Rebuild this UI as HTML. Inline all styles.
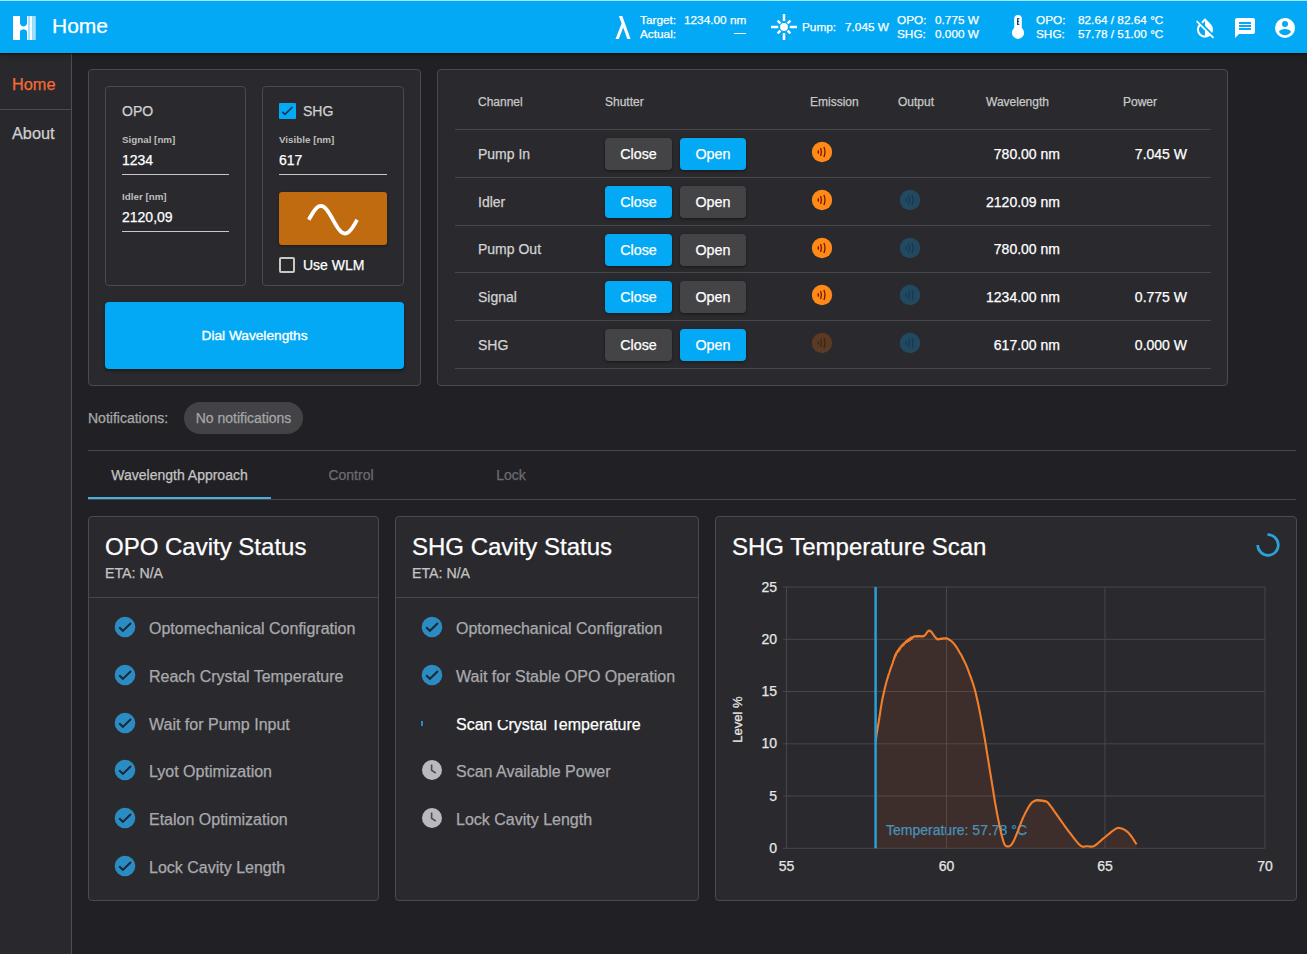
<!DOCTYPE html>
<html><head><meta charset="utf-8">
<style>
*{box-sizing:border-box;margin:0;padding:0}
html,body{width:1307px;height:954px;overflow:hidden;background:#212125;font-family:"Liberation Sans",sans-serif;color:#fff}
.a{position:absolute}
.t{position:absolute;white-space:nowrap;line-height:1;-webkit-text-stroke-width:0.25px}
#hdr{left:0;top:0;width:1307px;height:53px;background:#03a9f4;box-shadow:inset 0 1px 0 #9eeaff,0 1px 1px rgba(0,0,0,.5),0 2px 6px rgba(0,0,0,.25);z-index:5}
#side{left:0;top:53px;width:72px;height:901px;background:#29292d;border-right:1px solid #4d4d52}
.box{position:absolute;background:#2a2a2e;border:1px solid #4a4a4f;border-radius:4px}
.btn{position:absolute;height:32px;border-radius:4px;font-size:14.3px;text-align:center;line-height:33px;-webkit-text-stroke-width:0.25px;color:#fff;box-shadow:0 1px 3px rgba(0,0,0,.45)}
.g{background:#444447}
.b{background:#03a9f4}
.hl{position:absolute;height:1px;background:#46464b}
</style></head><body>
<div id="hdr" class="a">
<svg class="a" style="left:13px;top:16px" width="23" height="24" viewBox="0 0 23 24">
<path fill="#fff" d="M0 0H7V7.5C8 11.4 13 11.4 14 7.5V15.4C13 12.6 8 12.6 7 15.4V24H0Z"/>
<rect x="14" y="0" width="1" height="24" fill="#fff"/>
<rect x="15" y="0" width="2" height="24" fill="#a8e2ff"/>
<rect x="17" y="0" width="2.2" height="24" fill="#f4fcff"/>
<rect x="19.2" y="0" width="2.5" height="24" fill="#a8e2ff"/>
<rect x="21.7" y="0" width="0.8" height="24" fill="#fff"/>
</svg>
<div class="t" style="left:52px;top:14.6px;font-size:21px">Home</div>
<svg class="a" style="left:615px;top:16px" width="16" height="23" viewBox="0 0 16 23"><path fill="#fff" d="M3.9 0H7.3L15.6 23H12.3L8.2 11.6L3.8 23H0.5L6.6 7.4Z"/></svg>
<div class="t" style="left:640px;top:14.6px;font-size:11.8px">Target:</div>
<div class="t" style="left:640px;top:29px;font-size:11.8px">Actual:</div>
<div class="t" style="left:684px;top:14.6px;font-size:11.8px">1234.00 nm</div>
<div class="a" style="left:734px;top:33px;width:12px;height:1px;background:#fff"></div>
<svg class="a" style="left:771px;top:14px" width="26" height="26" viewBox="0 0 26 26"><circle cx="13" cy="13" r="3.9" fill="#fff"/><g stroke="#fff" stroke-width="2.5" stroke-linecap="butt"><path d="M13 0V7M13 19V26M0 13H7.3M18.7 13H26"/><path d="M9.4 9.4L6.6 6.6M16.6 16.6L19.4 19.4M16.6 9.4L19.4 6.6M9.4 16.6L6.6 19.4"/></g></svg>
<div class="t" style="left:802px;top:22px;font-size:11.8px">Pump:</div>
<div class="t" style="left:845px;top:22px;font-size:11.8px">7.045 W</div>
<div class="t" style="left:897px;top:14.6px;font-size:11.8px">OPO:</div>
<div class="t" style="left:897px;top:29px;font-size:11.8px">SHG:</div>
<div class="t" style="left:935px;top:14.6px;font-size:11.8px">0.775 W</div>
<div class="t" style="left:935px;top:29px;font-size:11.8px">0.000 W</div>
<svg class="a" style="left:1011px;top:14px" width="14" height="26" viewBox="0 0 14 26"><rect x="3.2" y="1" width="7.6" height="18" rx="3.8" fill="#fff"/><circle cx="7" cy="18.8" r="6.1" fill="#fff"/><path d="M6.7 4.2V11" stroke="#123a5c" stroke-width="1.3"/><path d="M6.7 4.5H8.4M6.7 7.3H8.2M6.7 10.4H8.4" stroke="#123a5c" stroke-width="0.9"/></svg>
<div class="t" style="left:1036px;top:14.6px;font-size:11.8px">OPO:</div>
<div class="t" style="left:1036px;top:29px;font-size:11.8px">SHG:</div>
<div class="t" style="left:1078px;top:14.6px;font-size:11.8px">82.64 / 82.64 &#176;C</div>
<div class="t" style="left:1078px;top:29px;font-size:11.8px">57.78 / 51.00 &#176;C</div>
<svg class="a" style="left:1193px;top:16px" width="24" height="24" viewBox="0 0 24 24"><path fill="#fff" d="M20.65 20.87l-2.35-2.35-6.3-6.3-3.56-3.56-1.42-1.42L4.27 4.5 3 5.77l2.78 2.78c-2.55 3.14-2.36 7.76.56 10.69C7.9 20.8 9.95 21.58 12 21.58c1.79 0 3.57-.59 5.03-1.78l2.7 2.7L21 21.23l-.35-.36zM12 19.59c-1.6 0-3.11-.62-4.24-1.76C6.62 16.69 6 15.19 6 13.59c0-1.32.43-2.57 1.21-3.6L12 14.77v4.82zM12 5.1v4.58l7.25 7.26c1.37-2.96.84-6.57-1.6-9.01L12 2.27l-3.7 3.7 1.41 1.41L12 5.1z"/></svg>
<svg class="a" style="left:1233px;top:16px" width="24" height="24" viewBox="0 0 24 24"><path fill="#fff" d="M20 2H4c-1.1 0-1.99.9-1.99 2L2 22l4-4h14c1.1 0 2-.9 2-2V4c0-1.1-.9-2-2-2zm-2 12H6v-2h12v2zm0-3H6V9h12v2zm0-3H6V6h12v2z"/></svg>
<svg class="a" style="left:1273px;top:16px" width="24" height="24" viewBox="0 0 24 24"><path fill="#fff" d="M12,19.2C9.5,19.2 7.29,17.92 6,16C6.03,14 10,12.9 12,12.9C14,12.9 17.97,14 18,16C16.71,17.92 14.5,19.2 12,19.2M12,5A3,3 0 0,1 15,8A3,3 0 0,1 12,11A3,3 0 0,1 9,8A3,3 0 0,1 12,5M12,2A10,10 0 0,0 2,12A10,10 0 0,0 12,22A10,10 0 0,0 22,12C22,6.47 17.5,2 12,2Z"/></svg>
</div>
<div id="side" class="a">
<div class="t" style="left:12px;top:23px;font-size:16.3px;color:#f36a36">Home</div>
<div class="a" style="left:0;top:56px;width:71px;height:1px;background:#4a4a4f"></div>
<div class="t" style="left:12px;top:72px;font-size:16.3px;color:#cfcfcf">About</div>
</div>
<div class="box" style="left:88px;top:69px;width:333px;height:317px"></div>
<div class="box" style="left:105px;top:86px;width:141px;height:200px"></div>
<div class="t" style="left:122px;top:104px;font-size:14px;color:#d0d0d0">OPO</div>
<div class="t" style="left:122px;top:135px;font-size:9.8px;font-weight:bold;color:#bdbdbd;-webkit-text-stroke-width:0">Signal [nm]</div>
<div class="t" style="left:122px;top:153px;font-size:14px;color:#fff">1234</div>
<div class="a" style="left:122px;top:174px;width:107px;height:1px;background:#c8c8c8"></div>
<div class="t" style="left:122px;top:192px;font-size:9.8px;font-weight:bold;color:#bdbdbd;-webkit-text-stroke-width:0">Idler [nm]</div>
<div class="t" style="left:122px;top:210px;font-size:14px;color:#fff">2120,09</div>
<div class="a" style="left:122px;top:231px;width:107px;height:1px;background:#c8c8c8"></div>
<div class="box" style="left:262px;top:86px;width:142px;height:200px"></div>
<div class="a" style="left:279px;top:102.5px;width:16.5px;height:16.5px;background:#03a9f4;border-radius:1px"></div>
<svg class="a" style="left:279px;top:103px" width="16" height="16" viewBox="0 0 16 16"><path d="M3.2 8.8L6 11.3L13.4 4" fill="none" stroke="#173452" stroke-width="1.7"/></svg>
<div class="t" style="left:303px;top:104px;font-size:14px;color:#d0d0d0">SHG</div>
<div class="t" style="left:279px;top:135px;font-size:9.8px;font-weight:bold;color:#bdbdbd;-webkit-text-stroke-width:0">Visible [nm]</div>
<div class="t" style="left:279px;top:153px;font-size:14px;color:#fff">617</div>
<div class="a" style="left:279px;top:174px;width:108px;height:1px;background:#c8c8c8"></div>
<div class="a" style="left:279px;top:192px;width:108px;height:53px;background:#c16b10;border-radius:3px;box-shadow:0 1px 3px rgba(0,0,0,.4)"></div>
<svg class="a" style="left:279px;top:192px" width="108" height="53" viewBox="0 0 108 53"><path d="M29.80 27.70L31.01 25.54L32.22 23.44L33.42 21.43L34.63 19.59L35.84 17.94L37.05 16.54L38.25 15.40L39.46 14.58L40.67 14.07L41.88 13.90L43.08 14.07L44.29 14.58L45.50 15.40L46.70 16.54L47.91 17.94L49.12 19.59L50.33 21.43L51.53 23.44L52.74 25.54L53.95 27.70L55.16 29.86L56.37 31.96L57.57 33.97L58.78 35.81L59.99 37.46L61.20 38.86L62.40 40.00L63.61 40.82L64.82 41.33L66.02 41.50L67.23 41.33L68.44 40.82L69.65 40.00L70.86 38.86L72.06 37.46L73.27 35.81L74.48 33.97L75.69 31.96L76.89 29.86L78.10 27.70" fill="none" stroke="#fff" stroke-width="3.8" stroke-linecap="butt" stroke-linejoin="round"/></svg>
<div class="a" style="left:279px;top:257px;width:16px;height:16px;border:2px solid #c8c8c8;border-radius:2px"></div>
<div class="t" style="left:303px;top:258px;font-size:14px;color:#fff">Use WLM</div>
<div class="a" style="left:105px;top:302px;width:299px;height:67px;background:#03a9f4;border-radius:4px;box-shadow:0 2px 3px rgba(0,0,0,.4)"></div>
<div class="t" style="left:105px;top:329px;width:299px;text-align:center;font-size:13.7px;-webkit-text-stroke:0.35px #fff;color:#fff">Dial Wavelengths</div>
<div class="box" style="left:437px;top:69px;width:791px;height:317px"></div>
<div class="t" style="left:478px;top:96px;font-size:12px;color:#c8c8c8">Channel</div>
<div class="t" style="left:605px;top:96px;font-size:12px;color:#c8c8c8">Shutter</div>
<div class="t" style="left:810px;top:96px;font-size:12px;color:#c8c8c8">Emission</div>
<div class="t" style="left:898px;top:96px;font-size:12px;color:#c8c8c8">Output</div>
<div class="t" style="left:986px;top:96px;font-size:12px;color:#c8c8c8">Wavelength</div>
<div class="t" style="left:1123px;top:96px;font-size:12px;color:#c8c8c8">Power</div>
<div class="hl" style="left:455px;top:129px;width:756px"></div>
<div class="t" style="left:478px;top:146.8px;font-size:14px;color:#d2d2d2">Pump In</div>
<div class="btn g" style="left:605px;top:138.0px;width:67px">Close</div>
<div class="btn b" style="left:680px;top:138.0px;width:66px">Open</div>
<svg class="a" style="left:811.1px;top:141.0px" width="22" height="22" viewBox="0 0 22 22"><circle cx="11" cy="11" r="10.2" fill="#ff8a17"/><ellipse cx="7.3" cy="10.9" rx="0.8" ry="2" fill="#7a1500"/><g fill="none" stroke="#7a1500" stroke-width="1.3"><path d="M9.6 6.9Q11.3 10.9 9.6 14.9"/><path d="M12.9 5.9Q15.1 10.9 12.9 15.9"/></g></svg>

<div class="t" style="left:900px;width:160px;text-align:right;top:146.8px;font-size:14px;color:#fff">780.00 nm</div>
<div class="t" style="left:1027px;width:160px;text-align:right;top:146.8px;font-size:14px;color:#fff">7.045 W</div>
<div class="hl" style="left:455px;top:176.8px;width:756px"></div>
<div class="t" style="left:478px;top:194.5px;font-size:14px;color:#d2d2d2">Idler</div>
<div class="btn b" style="left:605px;top:185.8px;width:67px">Close</div>
<div class="btn g" style="left:680px;top:185.8px;width:66px">Open</div>
<svg class="a" style="left:811.1px;top:188.7px" width="22" height="22" viewBox="0 0 22 22"><circle cx="11" cy="11" r="10.2" fill="#ff8a17"/><ellipse cx="7.3" cy="10.9" rx="0.8" ry="2" fill="#7a1500"/><g fill="none" stroke="#7a1500" stroke-width="1.3"><path d="M9.6 6.9Q11.3 10.9 9.6 14.9"/><path d="M12.9 5.9Q15.1 10.9 12.9 15.9"/></g></svg>
<svg class="a" style="left:899.1px;top:188.7px" width="22" height="22" viewBox="0 0 22 22"><circle cx="11" cy="11" r="10.2" fill="#214a62"/><ellipse cx="7.3" cy="10.9" rx="0.8" ry="2" fill="#173850"/><g fill="none" stroke="#173850" stroke-width="1.3"><path d="M9.6 6.9Q11.3 10.9 9.6 14.9"/><path d="M12.9 5.9Q15.1 10.9 12.9 15.9"/></g></svg>
<div class="t" style="left:900px;width:160px;text-align:right;top:194.5px;font-size:14px;color:#fff">2120.09 nm</div>
<div class="hl" style="left:455px;top:224.5px;width:756px"></div>
<div class="t" style="left:478px;top:242.3px;font-size:14px;color:#d2d2d2">Pump Out</div>
<div class="btn b" style="left:605px;top:233.5px;width:67px">Close</div>
<div class="btn g" style="left:680px;top:233.5px;width:66px">Open</div>
<svg class="a" style="left:811.1px;top:236.5px" width="22" height="22" viewBox="0 0 22 22"><circle cx="11" cy="11" r="10.2" fill="#ff8a17"/><ellipse cx="7.3" cy="10.9" rx="0.8" ry="2" fill="#7a1500"/><g fill="none" stroke="#7a1500" stroke-width="1.3"><path d="M9.6 6.9Q11.3 10.9 9.6 14.9"/><path d="M12.9 5.9Q15.1 10.9 12.9 15.9"/></g></svg>
<svg class="a" style="left:899.1px;top:236.5px" width="22" height="22" viewBox="0 0 22 22"><circle cx="11" cy="11" r="10.2" fill="#214a62"/><ellipse cx="7.3" cy="10.9" rx="0.8" ry="2" fill="#173850"/><g fill="none" stroke="#173850" stroke-width="1.3"><path d="M9.6 6.9Q11.3 10.9 9.6 14.9"/><path d="M12.9 5.9Q15.1 10.9 12.9 15.9"/></g></svg>
<div class="t" style="left:900px;width:160px;text-align:right;top:242.3px;font-size:14px;color:#fff">780.00 nm</div>
<div class="hl" style="left:455px;top:272.2px;width:756px"></div>
<div class="t" style="left:478px;top:290.0px;font-size:14px;color:#d2d2d2">Signal</div>
<div class="btn b" style="left:605px;top:281.2px;width:67px">Close</div>
<div class="btn g" style="left:680px;top:281.2px;width:66px">Open</div>
<svg class="a" style="left:811.1px;top:284.2px" width="22" height="22" viewBox="0 0 22 22"><circle cx="11" cy="11" r="10.2" fill="#ff8a17"/><ellipse cx="7.3" cy="10.9" rx="0.8" ry="2" fill="#7a1500"/><g fill="none" stroke="#7a1500" stroke-width="1.3"><path d="M9.6 6.9Q11.3 10.9 9.6 14.9"/><path d="M12.9 5.9Q15.1 10.9 12.9 15.9"/></g></svg>
<svg class="a" style="left:899.1px;top:284.2px" width="22" height="22" viewBox="0 0 22 22"><circle cx="11" cy="11" r="10.2" fill="#214a62"/><ellipse cx="7.3" cy="10.9" rx="0.8" ry="2" fill="#173850"/><g fill="none" stroke="#173850" stroke-width="1.3"><path d="M9.6 6.9Q11.3 10.9 9.6 14.9"/><path d="M12.9 5.9Q15.1 10.9 12.9 15.9"/></g></svg>
<div class="t" style="left:900px;width:160px;text-align:right;top:290.0px;font-size:14px;color:#fff">1234.00 nm</div>
<div class="t" style="left:1027px;width:160px;text-align:right;top:290.0px;font-size:14px;color:#fff">0.775 W</div>
<div class="hl" style="left:455px;top:320.0px;width:756px"></div>
<div class="t" style="left:478px;top:337.8px;font-size:14px;color:#d2d2d2">SHG</div>
<div class="btn g" style="left:605px;top:329.0px;width:67px">Close</div>
<div class="btn b" style="left:680px;top:329.0px;width:66px">Open</div>
<svg class="a" style="left:811.1px;top:332.0px" width="22" height="22" viewBox="0 0 22 22"><circle cx="11" cy="11" r="10.2" fill="#5a3a22"/><ellipse cx="7.3" cy="10.9" rx="0.8" ry="2" fill="#3c2618"/><g fill="none" stroke="#3c2618" stroke-width="1.3"><path d="M9.6 6.9Q11.3 10.9 9.6 14.9"/><path d="M12.9 5.9Q15.1 10.9 12.9 15.9"/></g></svg>
<svg class="a" style="left:899.1px;top:332.0px" width="22" height="22" viewBox="0 0 22 22"><circle cx="11" cy="11" r="10.2" fill="#214a62"/><ellipse cx="7.3" cy="10.9" rx="0.8" ry="2" fill="#173850"/><g fill="none" stroke="#173850" stroke-width="1.3"><path d="M9.6 6.9Q11.3 10.9 9.6 14.9"/><path d="M12.9 5.9Q15.1 10.9 12.9 15.9"/></g></svg>
<div class="t" style="left:900px;width:160px;text-align:right;top:337.8px;font-size:14px;color:#fff">617.00 nm</div>
<div class="t" style="left:1027px;width:160px;text-align:right;top:337.8px;font-size:14px;color:#fff">0.000 W</div>
<div class="hl" style="left:455px;top:367.8px;width:756px"></div>
<div class="t" style="left:88px;top:411px;font-size:14px;color:#a8a8a8">Notifications:</div>
<div class="a" style="left:184px;top:402px;width:119px;height:32px;border-radius:16px;background:#434347"></div>
<div class="t" style="left:184px;top:411px;width:119px;text-align:center;font-size:14px;color:#a6a6a6">No notifications</div>
<div class="hl" style="left:88px;top:450px;width:1208px"></div>
<div class="t" style="left:88px;top:468px;width:183px;text-align:center;font-size:14px;color:#c4c4c4">Wavelength Approach</div>
<div class="t" style="left:271px;top:468px;width:160px;text-align:center;font-size:14px;color:#6c6c70">Control</div>
<div class="t" style="left:431px;top:468px;width:160px;text-align:center;font-size:14px;color:#6c6c70">Lock</div>
<div class="hl" style="left:88px;top:499px;width:1208px"></div>
<div class="a" style="left:88px;top:497px;width:183px;height:2px;background:#4aaedb"></div>
<div class="box" style="left:88px;top:516px;width:291px;height:385px"></div>
<div class="t" style="left:105px;top:534.8px;font-size:24px;color:#fff">OPO Cavity Status</div>
<div class="t" style="left:105px;top:566.3px;font-size:14.2px;color:#c4c4c4">ETA: N/A</div>
<div class="hl" style="left:89px;top:597px;width:289px"></div>
<div class="box" style="left:395px;top:516px;width:304px;height:385px"></div>
<div class="t" style="left:412px;top:534.8px;font-size:24px;color:#fff">SHG Cavity Status</div>
<div class="t" style="left:412px;top:566.3px;font-size:14.2px;color:#c4c4c4">ETA: N/A</div>
<div class="hl" style="left:396px;top:597px;width:302px"></div>
<div class="box" style="left:715px;top:516px;width:582px;height:385px"></div>
<div class="t" style="left:732px;top:534.8px;font-size:24px;color:#fff">SHG Temperature Scan</div>
<svg class="a" style="left:114px;top:616px" width="22" height="22" viewBox="0 0 22 22"><circle cx="11" cy="11" r="10.3" fill="#2b8cc4"/><path d="M5.2 11.2L8.9 14.9L17 7.1" fill="none" stroke="#1b2733" stroke-width="2.1"/></svg>
<div class="t" style="left:149px;top:620.8px;font-size:16px;color:#a9a9ad">Optomechanical Configration</div>
<svg class="a" style="left:114px;top:664px" width="22" height="22" viewBox="0 0 22 22"><circle cx="11" cy="11" r="10.3" fill="#2b8cc4"/><path d="M5.2 11.2L8.9 14.9L17 7.1" fill="none" stroke="#1b2733" stroke-width="2.1"/></svg>
<div class="t" style="left:149px;top:668.8px;font-size:16px;color:#a9a9ad">Reach Crystal Temperature</div>
<svg class="a" style="left:114px;top:712px" width="22" height="22" viewBox="0 0 22 22"><circle cx="11" cy="11" r="10.3" fill="#2b8cc4"/><path d="M5.2 11.2L8.9 14.9L17 7.1" fill="none" stroke="#1b2733" stroke-width="2.1"/></svg>
<div class="t" style="left:149px;top:716.8px;font-size:16px;color:#a9a9ad">Wait for Pump Input</div>
<svg class="a" style="left:114px;top:759px" width="22" height="22" viewBox="0 0 22 22"><circle cx="11" cy="11" r="10.3" fill="#2b8cc4"/><path d="M5.2 11.2L8.9 14.9L17 7.1" fill="none" stroke="#1b2733" stroke-width="2.1"/></svg>
<div class="t" style="left:149px;top:763.8px;font-size:16px;color:#a9a9ad">Lyot Optimization</div>
<svg class="a" style="left:114px;top:807px" width="22" height="22" viewBox="0 0 22 22"><circle cx="11" cy="11" r="10.3" fill="#2b8cc4"/><path d="M5.2 11.2L8.9 14.9L17 7.1" fill="none" stroke="#1b2733" stroke-width="2.1"/></svg>
<div class="t" style="left:149px;top:811.8px;font-size:16px;color:#a9a9ad">Etalon Optimization</div>
<svg class="a" style="left:114px;top:855px" width="22" height="22" viewBox="0 0 22 22"><circle cx="11" cy="11" r="10.3" fill="#2b8cc4"/><path d="M5.2 11.2L8.9 14.9L17 7.1" fill="none" stroke="#1b2733" stroke-width="2.1"/></svg>
<div class="t" style="left:149px;top:859.8px;font-size:16px;color:#a9a9ad">Lock Cavity Length</div>
<svg class="a" style="left:421px;top:616px" width="22" height="22" viewBox="0 0 22 22"><circle cx="11" cy="11" r="10.3" fill="#2b8cc4"/><path d="M5.2 11.2L8.9 14.9L17 7.1" fill="none" stroke="#1b2733" stroke-width="2.1"/></svg>
<div class="t" style="left:456px;top:620.8px;font-size:16px;color:#a9a9ad">Optomechanical Configration</div>
<svg class="a" style="left:421px;top:664px" width="22" height="22" viewBox="0 0 22 22"><circle cx="11" cy="11" r="10.3" fill="#2b8cc4"/><path d="M5.2 11.2L8.9 14.9L17 7.1" fill="none" stroke="#1b2733" stroke-width="2.1"/></svg>
<div class="t" style="left:456px;top:668.8px;font-size:16px;color:#a9a9ad">Wait for Stable OPO Operation</div>
<div class="a" style="left:421px;top:721px;width:2px;height:5px;background:#2a8ac0"></div>
<div class="t" style="left:456px;top:716.8px;font-size:16px;color:#fff">Scan Crystal Temperature</div>
<svg class="a" style="left:421px;top:759px" width="22" height="22" viewBox="0 0 22 22"><circle cx="11" cy="11" r="10" fill="#b9b9be"/><path d="M10.6 5.5V11.3L14.8 14" fill="none" stroke="#4a4a50" stroke-width="1.6"/></svg>
<div class="t" style="left:456px;top:763.8px;font-size:16px;color:#a9a9ad">Scan Available Power</div>
<svg class="a" style="left:421px;top:807px" width="22" height="22" viewBox="0 0 22 22"><circle cx="11" cy="11" r="10" fill="#b9b9be"/><path d="M10.6 5.5V11.3L14.8 14" fill="none" stroke="#4a4a50" stroke-width="1.6"/></svg>
<div class="t" style="left:456px;top:811.8px;font-size:16px;color:#a9a9ad">Lock Cavity Length</div>
<svg class="a" style="left:1254px;top:530.5px" width="28" height="28" viewBox="0 0 28 28"><path d="M13.5 3.7A10.3 10.3 0 1 1 3.7 14" fill="none" stroke="#29a3dd" stroke-width="2.7"/></svg>
<svg class="a" style="left:0;top:0;z-index:2" width="1307" height="954" viewBox="0 0 1307 954"><path d="M783 587.0H1265" stroke="#47474b" stroke-width="1"/><path d="M783 639.3H1265" stroke="#47474b" stroke-width="1"/><path d="M783 691.5H1265" stroke="#47474b" stroke-width="1"/><path d="M783 743.8H1265" stroke="#47474b" stroke-width="1"/><path d="M783 796.0H1265" stroke="#47474b" stroke-width="1"/><path d="M783 848.3H1265" stroke="#47474b" stroke-width="1"/><path d="M786.5 587V848.3" stroke="#47474b" stroke-width="1"/><path d="M946.5 587V848.3" stroke="#47474b" stroke-width="1"/><path d="M1105 587V848.3" stroke="#47474b" stroke-width="1"/><path d="M1265 587V848.3" stroke="#47474b" stroke-width="1"/><path d="M875.6 741.0L876.0 738.8L876.4 735.8L877.0 732.2L877.6 728.3L878.3 724.4L878.9 720.6L879.5 716.9L880.1 713.1L880.6 709.3L881.3 705.4L881.9 701.6L882.6 698.0L883.4 694.4L884.2 690.9L885.0 687.5L885.9 684.1L886.7 680.8L887.6 678.2L888.5 674.9L889.4 672.5L890.3 669.5L891.1 667.3L892.0 664.8L892.7 663.1L893.3 660.6L893.8 660.1L894.3 657.3L894.8 657.7L895.2 654.9L895.8 655.3L896.4 652.6L897.1 652.7L897.8 650.4L898.5 651.2L899.2 648.4L900.0 649.1L900.8 646.4L901.7 646.6L902.6 644.4L903.5 645.2L904.4 642.9L905.3 643.0L906.2 641.0L907.0 641.9L907.9 639.7L908.7 640.9L909.5 638.5L910.3 639.8L911.0 637.6L911.7 638.8L912.4 637.2L913.0 637.3L913.7 636.5L914.4 636.7L915.1 636.2L915.9 636.5L916.6 636.0L917.4 636.5L918.2 636.1L919.0 636.4L919.8 636.0L920.7 636.5L921.6 636.2L922.4 636.5L923.3 636.0L924.1 636.1L924.9 635.0L925.7 634.6L926.4 633.1L927.1 632.6L927.8 631.3L928.4 631.1L928.9 630.5L929.4 630.9L929.8 630.5L930.2 631.2L930.6 631.1L931.0 631.8L931.5 631.9L932.0 632.9L932.5 633.3L933.0 634.3L933.5 634.6L934.0 635.8L934.5 636.1L935.0 637.1L935.5 637.4L936.1 638.3L936.6 638.5L937.2 639.3L937.8 639.0L938.4 639.4L939.0 639.0L939.6 639.2L940.3 638.7L941.0 639.0L941.8 638.5L942.6 638.9L943.5 638.2L944.4 638.6L945.3 638.1L946.1 638.5L946.9 638.4L947.7 639.0L948.6 639.1L949.4 639.9L950.1 640.0L950.9 640.9L951.6 641.2L952.3 642.2L953.0 642.4L953.6 643.6L954.3 643.9L955.0 645.2L955.7 645.9L956.5 647.3L957.2 648.1L958.0 649.7L958.7 650.6L959.5 652.3L960.2 653.3L961.0 654.6L961.8 656.0L962.5 657.5L963.2 659.0L964.0 660.5L964.7 662.0L965.4 663.4L966.1 664.9L966.8 666.6L967.6 668.6L968.5 671.0L969.5 673.8L970.7 676.9L971.9 680.3L973.2 684.1L974.4 688.3L975.7 693.0L976.9 698.3L978.2 704.1L979.5 710.4L980.8 717.0L982.0 723.8L983.3 730.7L984.6 737.9L985.9 745.5L987.1 753.4L988.4 761.2L989.6 768.8L990.8 776.0L991.9 782.8L993.0 789.5L994.0 796.0L995.0 802.2L996.1 808.1L997.1 813.7L998.2 819.2L999.3 824.5L1000.4 829.6L1001.4 834.2L1002.5 838.2L1003.4 841.4L1004.2 843.7L1005.0 845.1L1005.7 845.9L1006.4 846.3L1007.1 846.4L1007.9 846.4L1008.7 846.4L1009.5 846.2L1010.4 845.7L1011.3 844.8L1012.3 843.4L1013.5 841.4L1014.9 838.4L1016.5 834.5L1018.2 830.1L1019.9 825.6L1021.5 821.4L1023.0 817.9L1024.3 815.1L1025.5 812.6L1026.7 810.4L1027.8 808.4L1028.8 806.7L1029.8 805.2L1030.7 804.0L1031.5 803.0L1032.2 802.3L1032.9 801.7L1033.7 801.3L1034.4 801.4L1035.2 800.4L1035.9 800.7L1036.7 800.0L1037.5 800.5L1038.2 800.1L1039.0 800.8L1039.8 800.1L1040.5 800.7L1041.3 800.3L1042.1 800.9L1042.8 800.5L1043.6 801.1L1044.3 800.8L1045.0 801.5L1045.6 801.1L1046.3 801.5L1047.2 802.0L1048.2 803.0L1049.4 804.5L1050.8 806.3L1052.4 808.4L1054.0 810.8L1055.7 813.2L1057.4 815.6L1059.2 818.1L1061.1 820.8L1063.0 823.5L1065.0 826.3L1067.0 829.0L1068.9 831.6L1070.9 834.2L1072.9 836.8L1074.9 839.4L1076.9 841.8L1078.7 843.9L1080.3 845.4L1081.7 846.3L1082.9 846.7L1083.9 846.7L1084.9 846.5L1085.9 846.3L1087.0 846.2L1088.1 846.3L1089.3 846.5L1090.4 846.6L1091.6 846.6L1092.8 846.5L1094.1 846.0L1095.5 845.2L1096.9 844.1L1098.4 842.8L1100.0 841.4L1101.6 839.9L1103.3 838.5L1105.2 837.0L1107.2 835.3L1109.3 833.6L1111.3 831.9L1113.2 830.5L1114.8 829.4L1116.1 828.7L1117.0 828.2L1117.9 827.9L1118.6 827.9L1119.5 828.0L1120.5 828.2L1121.7 828.6L1123.0 829.0L1124.3 829.7L1125.7 830.5L1127.1 831.6L1128.5 832.8L1129.9 834.5L1131.5 836.5L1133.0 838.8L1134.5 841.1L1135.7 843.0L1136.6 844.3L1136.6 848.3L875.6 848.3Z" fill="rgba(255,90,20,0.095)"/><path d="M875.6 741.0L876.0 738.8L876.4 735.8L877.0 732.2L877.6 728.3L878.3 724.4L878.9 720.6L879.5 716.9L880.1 713.1L880.6 709.3L881.3 705.4L881.9 701.6L882.6 698.0L883.4 694.4L884.2 690.9L885.0 687.5L885.9 684.1L886.7 680.8L887.6 678.2L888.5 674.9L889.4 672.5L890.3 669.5L891.1 667.3L892.0 664.8L892.7 663.1L893.3 660.6L893.8 660.1L894.3 657.3L894.8 657.7L895.2 654.9L895.8 655.3L896.4 652.6L897.1 652.7L897.8 650.4L898.5 651.2L899.2 648.4L900.0 649.1L900.8 646.4L901.7 646.6L902.6 644.4L903.5 645.2L904.4 642.9L905.3 643.0L906.2 641.0L907.0 641.9L907.9 639.7L908.7 640.9L909.5 638.5L910.3 639.8L911.0 637.6L911.7 638.8L912.4 637.2L913.0 637.3L913.7 636.5L914.4 636.7L915.1 636.2L915.9 636.5L916.6 636.0L917.4 636.5L918.2 636.1L919.0 636.4L919.8 636.0L920.7 636.5L921.6 636.2L922.4 636.5L923.3 636.0L924.1 636.1L924.9 635.0L925.7 634.6L926.4 633.1L927.1 632.6L927.8 631.3L928.4 631.1L928.9 630.5L929.4 630.9L929.8 630.5L930.2 631.2L930.6 631.1L931.0 631.8L931.5 631.9L932.0 632.9L932.5 633.3L933.0 634.3L933.5 634.6L934.0 635.8L934.5 636.1L935.0 637.1L935.5 637.4L936.1 638.3L936.6 638.5L937.2 639.3L937.8 639.0L938.4 639.4L939.0 639.0L939.6 639.2L940.3 638.7L941.0 639.0L941.8 638.5L942.6 638.9L943.5 638.2L944.4 638.6L945.3 638.1L946.1 638.5L946.9 638.4L947.7 639.0L948.6 639.1L949.4 639.9L950.1 640.0L950.9 640.9L951.6 641.2L952.3 642.2L953.0 642.4L953.6 643.6L954.3 643.9L955.0 645.2L955.7 645.9L956.5 647.3L957.2 648.1L958.0 649.7L958.7 650.6L959.5 652.3L960.2 653.3L961.0 654.6L961.8 656.0L962.5 657.5L963.2 659.0L964.0 660.5L964.7 662.0L965.4 663.4L966.1 664.9L966.8 666.6L967.6 668.6L968.5 671.0L969.5 673.8L970.7 676.9L971.9 680.3L973.2 684.1L974.4 688.3L975.7 693.0L976.9 698.3L978.2 704.1L979.5 710.4L980.8 717.0L982.0 723.8L983.3 730.7L984.6 737.9L985.9 745.5L987.1 753.4L988.4 761.2L989.6 768.8L990.8 776.0L991.9 782.8L993.0 789.5L994.0 796.0L995.0 802.2L996.1 808.1L997.1 813.7L998.2 819.2L999.3 824.5L1000.4 829.6L1001.4 834.2L1002.5 838.2L1003.4 841.4L1004.2 843.7L1005.0 845.1L1005.7 845.9L1006.4 846.3L1007.1 846.4L1007.9 846.4L1008.7 846.4L1009.5 846.2L1010.4 845.7L1011.3 844.8L1012.3 843.4L1013.5 841.4L1014.9 838.4L1016.5 834.5L1018.2 830.1L1019.9 825.6L1021.5 821.4L1023.0 817.9L1024.3 815.1L1025.5 812.6L1026.7 810.4L1027.8 808.4L1028.8 806.7L1029.8 805.2L1030.7 804.0L1031.5 803.0L1032.2 802.3L1032.9 801.7L1033.7 801.3L1034.4 801.4L1035.2 800.4L1035.9 800.7L1036.7 800.0L1037.5 800.5L1038.2 800.1L1039.0 800.8L1039.8 800.1L1040.5 800.7L1041.3 800.3L1042.1 800.9L1042.8 800.5L1043.6 801.1L1044.3 800.8L1045.0 801.5L1045.6 801.1L1046.3 801.5L1047.2 802.0L1048.2 803.0L1049.4 804.5L1050.8 806.3L1052.4 808.4L1054.0 810.8L1055.7 813.2L1057.4 815.6L1059.2 818.1L1061.1 820.8L1063.0 823.5L1065.0 826.3L1067.0 829.0L1068.9 831.6L1070.9 834.2L1072.9 836.8L1074.9 839.4L1076.9 841.8L1078.7 843.9L1080.3 845.4L1081.7 846.3L1082.9 846.7L1083.9 846.7L1084.9 846.5L1085.9 846.3L1087.0 846.2L1088.1 846.3L1089.3 846.5L1090.4 846.6L1091.6 846.6L1092.8 846.5L1094.1 846.0L1095.5 845.2L1096.9 844.1L1098.4 842.8L1100.0 841.4L1101.6 839.9L1103.3 838.5L1105.2 837.0L1107.2 835.3L1109.3 833.6L1111.3 831.9L1113.2 830.5L1114.8 829.4L1116.1 828.7L1117.0 828.2L1117.9 827.9L1118.6 827.9L1119.5 828.0L1120.5 828.2L1121.7 828.6L1123.0 829.0L1124.3 829.7L1125.7 830.5L1127.1 831.6L1128.5 832.8L1129.9 834.5L1131.5 836.5L1133.0 838.8L1134.5 841.1L1135.7 843.0L1136.6 844.3" fill="none" stroke="#f27e2c" stroke-width="2.1" stroke-linejoin="round"/><path d="M875.6 587V848.3" stroke="#2a9fd6" stroke-width="2.5"/></svg>
<div class="t" style="left:700px;width:77px;text-align:right;top:579.5px;font-size:14px;color:#e6e6e6">25</div>
<div class="t" style="left:700px;width:77px;text-align:right;top:631.8px;font-size:14px;color:#e6e6e6">20</div>
<div class="t" style="left:700px;width:77px;text-align:right;top:684.0px;font-size:14px;color:#e6e6e6">15</div>
<div class="t" style="left:700px;width:77px;text-align:right;top:736.3px;font-size:14px;color:#e6e6e6">10</div>
<div class="t" style="left:700px;width:77px;text-align:right;top:788.5px;font-size:14px;color:#e6e6e6">5</div>
<div class="t" style="left:700px;width:77px;text-align:right;top:840.8px;font-size:14px;color:#e6e6e6">0</div>
<div class="t" style="left:756.5px;width:60px;text-align:center;top:859px;font-size:14px;color:#e6e6e6">55</div>
<div class="t" style="left:916.5px;width:60px;text-align:center;top:859px;font-size:14px;color:#e6e6e6">60</div>
<div class="t" style="left:1075px;width:60px;text-align:center;top:859px;font-size:14px;color:#e6e6e6">65</div>
<div class="t" style="left:1235px;width:60px;text-align:center;top:859px;font-size:14px;color:#e6e6e6">70</div>
<div class="t" style="left:707px;top:713px;width:60px;text-align:center;font-size:13px;color:#e6e6e6;transform:rotate(-90deg)">Level %</div>
<div class="t" style="left:886px;top:823px;font-size:14px;color:#3598c9;z-index:1">Temperature: 57.78 &#176;C</div>

<div class="a" style="left:494px;top:718px;width:80px;height:1.8px;background:#2a2a2e"></div>
</body></html>
